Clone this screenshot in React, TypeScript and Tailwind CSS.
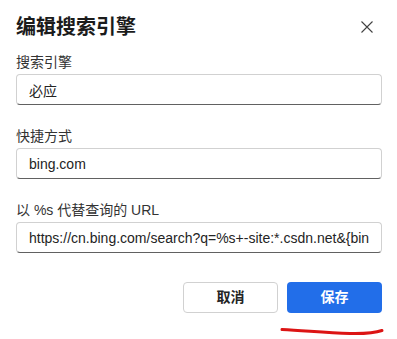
const font = '[font-family:"Liberation_Sans","Noto_Sans_CJK_SC",sans-serif]'

const fields = [
  { label: '搜索引擎', value: '必应' },
  { label: '快捷方式', value: 'bing.com' },
  { label: '以 %s 代替查询的 URL', value: 'https://cn.bing.com/search?q=%s+-site:*.csdn.net&{bing:BaseURL}' },
]

export default function App() {
  return (
    <div className={`w-[397px] h-[339px] bg-white overflow-hidden ${font}`}>
      <div className="pl-4 pr-[15px] pt-[13px]">
        {/* Titre */}
        <div className="flex items-center justify-between h-7">
          <h1 className="text-[20px] leading-7 font-bold text-[#1b1b1b]">编辑搜索引擎</h1>
          <button className="w-6 h-6 flex items-center justify-center mr-[3px]" title="关闭">
            <svg width="12" height="12" viewBox="0 0 12 12">
              <path d="M0.5 0.5 L11.5 11.5 M11.5 0.5 L0.5 11.5" stroke="#424242" strokeWidth="1.1" />
            </svg>
          </button>
        </div>

        {/* Champs */}
        <div className="flex flex-col gap-[21px] mt-[11px]">
          {fields.map((f) => (
            <div key={f.label}>
              <div className="h-5 mb-0.5 text-[14px] leading-5 text-[#333]">{f.label}</div>
              <input
                readOnly
                defaultValue={f.value}
                className={`w-full h-[31px] px-3 rounded-[4px] border border-[#d1d1d1] border-b-[#616161] text-[14px] text-[#242424] bg-white outline-none ${font}`}
              />
            </div>
          ))}
        </div>

        {/* Boutons */}
        <div className="flex justify-end gap-[9px] mt-[29px]">
          <button className="w-[95px] h-[31px] rounded-[4px] border border-[#d1d1d1] bg-white text-[14px] font-bold text-[#242424]">
            取消
          </button>
          <button className="w-[95px] h-[31px] rounded-[4px] bg-[#226ee9] text-[14px] font-bold text-white">
            保存
          </button>
        </div>

        <div className="flex justify-end mt-[13px] mr-[-4px]">
          <svg width="106" height="10" viewBox="0 0 106 10">
            <path
              d="M2 3.5 C 25 4.5, 45 7, 70 7.5 C 85 7.8, 95 7, 102 4.5"
              stroke="#dc1414"
              strokeWidth="3"
              fill="none"
              strokeLinecap="round"
            />
          </svg>
        </div>
      </div>
    </div>
  )
}
